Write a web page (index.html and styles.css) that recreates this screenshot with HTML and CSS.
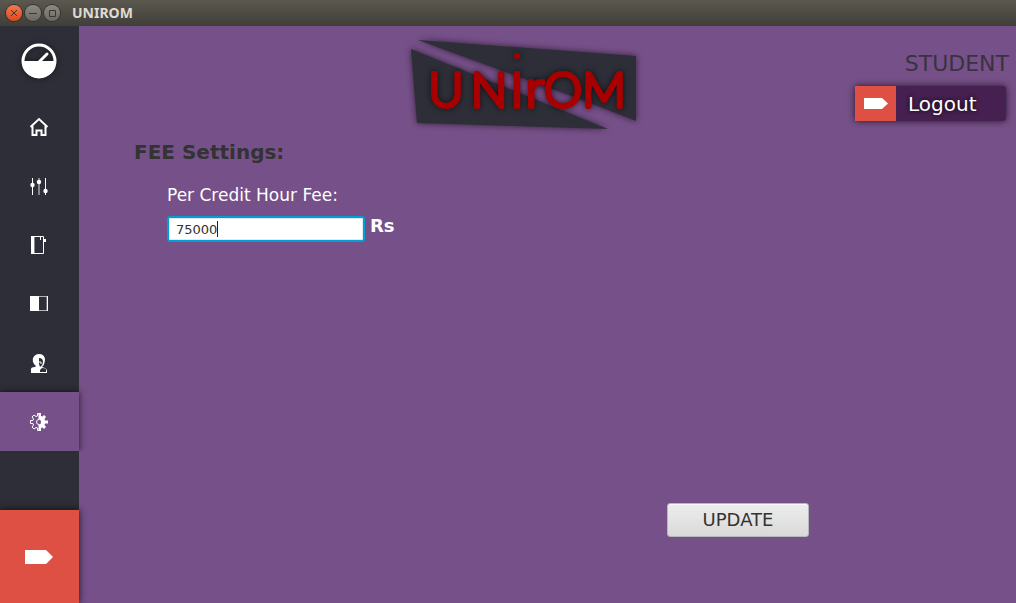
FILE: index.html
```html
<!DOCTYPE html>
<html lang="en">
<head>
<meta charset="utf-8">
<title>UNIROM</title>
<link rel="stylesheet" href="styles.css">
</head>
<body>
<header class="titlebar">
  <button class="win win-close" aria-label="Close"><svg viewBox="0 0 16 16"><path d="M5 5l6 6M11 5l-6 6"/></svg></button>
  <button class="win" aria-label="Minimize"><svg viewBox="0 0 16 16"><path d="M4 8.500h8"/></svg></button>
  <button class="win" aria-label="Maximize"><svg viewBox="0 0 16 16"><path d="M5.500 5.500h6v6h-6z"/></svg></button>
  <span class="title">UNIROM</span>
</header>
<div class="app">
  <nav class="sidebar">
    <div class="brand">
      <svg width="36" height="36" viewBox="0 0 36 36"><circle cx="18" cy="18" r="16" fill="none" stroke="#fff" stroke-width="3"/><path d="M1 18h34a17 17 0 0 1-34 0z" fill="#fff"/><path d="M18 19l8-8" stroke="#fff" stroke-width="3" stroke-linecap="round"/></svg>
    </div>
    <button class="item" aria-label="Home"><svg width="20" height="20" viewBox="0 0 20 20"><path d="M1.500 10L10 2l8.500 8M3.500 9v9h4v-4.500h5V18h4V9" fill="none" stroke="#fff" stroke-width="2"/></svg></button>
    <button class="item" aria-label="Controls"><svg width="20" height="20" viewBox="0 0 20 20"><path d="M3.500 2v17M16.500 2v17" stroke="#fff"/><path d="M10 2v17" stroke="#85858b" stroke-width="2"/><g fill="#fff"><circle cx="3.500" cy="9" r="2.200"/><circle cx="10" cy="6" r="2.200"/><circle cx="16.500" cy="15" r="2.200"/></g></svg></button>
    <button class="item" aria-label="Courses"><svg width="20" height="20" viewBox="0 0 20 20"><path d="M2 1h3v18H2z" fill="#fff"/><path d="M5 1h1v18H5z" fill="#85858b"/><path d="M5 1.500h9.500v17H5" fill="none" stroke="#fff"/><path d="M11 1h1v4h-1zM14 4h3v3h-3z" fill="#fff"/></svg></button>
    <button class="item" aria-label="Panels"><svg width="20" height="20" viewBox="0 0 20 20"><path d="M1 2h9v15H1z" fill="#fff"/><path d="M10 2.500h8v14h-8" fill="none" stroke="#b5b5b9"/><path d="M18.500 2v15" stroke="#fff"/></svg></button>
    <button class="item" aria-label="Users"><svg width="20" height="20" viewBox="0 0 20 20"><path d="M2 20v-4q0-2 4-2l1-1q-4-3-3-8 2-4 6-4 5 0 6 5 0 5-3 8l3 1q2 1 2 3v3z" fill="#fff"/><path d="M10 5q4 0 4 4 0 3-3 5l-1-3zM11 19v-2l2-2q3 0 4 1v3z" fill="#2e2e38"/><path d="M10 9h2v2" fill="none" stroke="#fff"/></svg></button>
    <button class="item active" aria-label="Settings" aria-current="page"><svg width="20" height="20" viewBox="0 0 20 20"><g fill="none" stroke="#fff"><path d="M10 1.500H8.500V4L7 4.500 5 3 3 5l1.500 2L4 8.500H1.500v3H4l.5 1.500L3 15l2 2 2-1.500 1.500.5v2.500H10"/><path d="M10 7.500a2.500 2.500 0 0 0 0 5"/></g><path d="M9.500 1H12v3l1.500.5L15 3l2 2-1.500 2 .5 1.500h3v3h-3l-.5 1.500 1.500 2-2 2-1.500-1.500-1.500.5v3H9.500v-6.500a2.500 2.500 0 0 0 0-5z" fill="#fff"/></svg></button>
    <button class="exit" aria-label="Exit"><svg width="28" height="14" viewBox="0 0 28 14"><path d="M0 0h21l7 7-7 7H0z" fill="#fff"/></svg></button>
  </nav>
  <main class="main">
    <div class="top">
      <svg class="logo" viewBox="0 0 228 92" role="img" aria-label="UNIROM">
        <g class="plate"><path d="M8 1L226 17V82L170 60z"/><path d="M1 10L198 90 7 84z"/></g>
        <g class="word"><text y="68" x="36 79 107 125 153 194">UNI<tspan class="small-r">r</tspan>OM</text><circle cx="107" cy="17" r="1"/></g>
      </svg>
      <div class="user">
        <span class="role">STUDENT</span>
        <button class="logout"><span class="tag"><svg width="24" height="11" viewBox="0 0 24 11"><path d="M0 0h18l6 5.500-6 5.500H0z" fill="#fff"/></svg></span><span class="logout-text">Logout</span></button>
      </div>
    </div>
    <form class="settings">
      <h1>FEE Settings:</h1>
      <div class="field">
        <label for="fee">Per Credit Hour Fee:</label>
        <div class="row">
          <div class="entry"><input id="fee" type="text" value="75000"><i class="caret"></i></div>
          <span class="unit">Rs</span>
        </div>
      </div>
      <button class="update" type="button">UPDATE</button>
    </form>
  </main>
</div>
</body>
</html>
```
FILE: styles.css
```css
* { box-sizing: border-box; }
body {
  margin: 0;
  min-height: 100vh;
  display: flex;
  flex-direction: column;
  font-family: "DejaVu Sans", sans-serif;
  background: #765088;
}
button { border: 0; padding: 0; font-family: inherit; }
svg { display: block; }

.titlebar {
  height: 26px;
  padding: 0 6px;
  display: flex;
  align-items: center;
  gap: 3px;
  background: linear-gradient(#5b584f, #403e39);
}
.win {
  width: 16px;
  height: 16px;
  border-radius: 50%;
  background: linear-gradient(#8c8982, #6b6962);
  box-shadow: 0 0 0 1px #35332f;
}
.win-close { background: linear-gradient(#f4794f, #dc4a1c); }
.win path { fill: none; stroke: #3a3833; }
.title {
  margin-left: 9px;
  font: bold 14px/18px "Noto Sans", sans-serif;
  color: #dfdbd2;
}

.app { flex: 1; display: flex; }
.sidebar {
  width: 79px;
  flex: none;
  display: flex;
  flex-direction: column;
  background: #2e2e38;
}
.brand {
  height: 71px;
  padding: 0 1px 2px 0;
  display: flex;
  justify-content: center;
  align-items: center;
}
.brand svg { filter: drop-shadow(0 0 3px #0008); }
.item, .exit {
  display: flex;
  align-items: center;
  justify-content: center;
  padding-right: 1px;
  background: transparent;
}
.item { height: 59px; }
.active { background: #765088; box-shadow: 0 0 6px #000b; clip-path: inset(-8px -8px 0 0); }
.exit {
  height: 93px;
  margin-top: auto;
  background: #de5044;
  box-shadow: 0 0 7px #000c;
}

.main { flex: 1; min-width: 0; display: flex; flex-direction: column; }
.top {
  display: grid;
  grid-template-columns: 7fr 228px 8fr;
  padding-top: 13px;
}
.logo { grid-column: 2; width: 228px; overflow: visible; }
.plate { fill: #2e2e38; filter: drop-shadow(0 0 3px #0009); }
.word {
  fill: #a80000;
  stroke: #a80000;
  stroke-width: 4px;
  stroke-linejoin: round;
  font-family: Lato, sans-serif;
  font-size: 48px;
  font-weight: 300;
  text-anchor: middle;
  filter: drop-shadow(0 0 3px #000a);
}
.small-r { font-size: 52px; }
.user { display: flex; flex-direction: column; align-items: flex-end; padding: 11px 7px 0 0; }
.role { font-size: 22px; line-height: 28px; color: #38333f; }
.logout {
  display: flex;
  width: 151px;
  height: 35px;
  margin: 8px 3px 0 0;
  border-radius: 3px;
  background: #452050;
  box-shadow: 0 0 7px #000b;
  color: #fff;
  font-size: 20px;
  text-shadow: 0 0 4px #000;
}
.tag {
  width: 41px;
  height: 100%;
  padding-left: 1px;
  display: flex;
  align-items: center;
  justify-content: center;
  background: #de5044;
}
.logout-text { padding-left: 12px; line-height: 36px; }

.settings { flex: 1; display: flex; flex-direction: column; padding: 9px 55px 66px; }
h1 { margin: 0; font-size: 20px; line-height: 24px; color: #333; }
.field { padding: 20px 33px 0; color: #fff; }
label { display: block; font-size: 17px; line-height: 22px; }
.row { display: flex; gap: 5px; margin-top: 10px; }
.entry { position: relative; }
input {
  display: block;
  width: 198px;
  height: 26px;
  padding: 0 7px;
  border: 2px solid #039ed3;
  border-radius: 3px;
  background: #fff;
  box-shadow: inset 0 0 0 1px #dcecf5;
  font: 13px "DejaVu Sans", sans-serif;
  color: #333;
  outline: 0;
}
.caret { position: absolute; left: 50px; top: 5px; width: 1px; height: 16px; background: #222; }
.unit { font-size: 18px; line-height: 20px; font-weight: bold; }
.update {
  width: 142px;
  height: 34px;
  margin: auto 152px 0 auto;
  padding-bottom: 2px;
  border: 1px solid #b8b8b8;
  border-radius: 3px;
  background: linear-gradient(#ededed, #d9d9d9);
  box-shadow: inset 0 1px #fafafa;
  font-size: 18px;
  color: #333;
}
```
